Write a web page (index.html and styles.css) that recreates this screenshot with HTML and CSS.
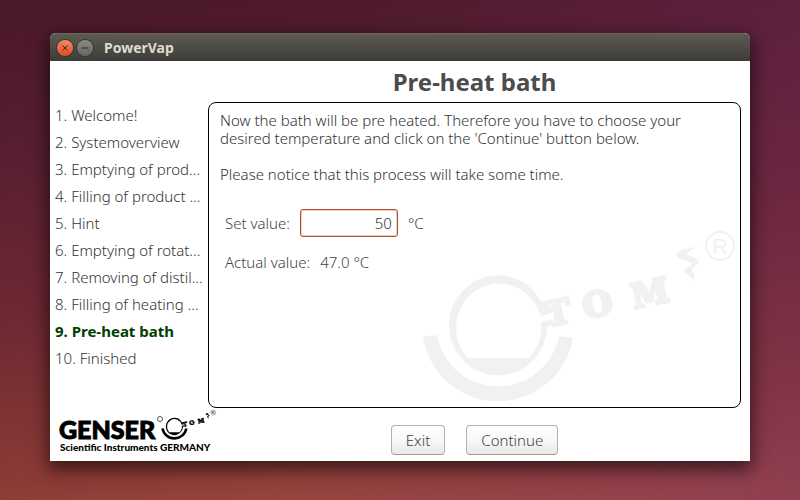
FILE: index.html
```
<!DOCTYPE html>
<html lang="en">
<head>
<meta charset="utf-8">
<meta name="viewport" content="width=device-width, initial-scale=1">
<title>PowerVap</title>
<link rel="stylesheet" href="styles.css">
</head>
<body>

<div class="window">
	<div class="titlebar">
		<button class="wbtn close" type="button" aria-label="Close">
			<svg width="16" height="16" viewBox="0 0 16 16"><path d="M5.500 5.500 L10.500 10.500 M10.500 5.500 L5.500 10.500"/></svg>
		</button>
		<button class="wbtn minimize" type="button" aria-label="Minimize">
			<svg width="16" height="16" viewBox="0 0 16 16"><path d="M4.500 8 H11.500"/></svg>
		</button>
		<span class="wtitle">PowerVap</span>
	</div>

	<div class="content">
		<h1>Pre-heat bath</h1>

		<ol class="steps">
			<li>1. Welcome!</li>
			<li>2. Systemoverview</li>
			<li>3. Emptying of prod...</li>
			<li>4. Filling of product ...</li>
			<li>5. Hint</li>
			<li>6. Emptying of rotat...</li>
			<li>7. Removing of distil...</li>
			<li>8. Filling of heating ...</li>
			<li class="current">9. Pre-heat bath</li>
			<li>10. Finished</li>
		</ol>

		<div class="panel">
			<!-- flask in the bath, reused by the small logo -->
			<svg class="watermark" width="330" height="187" viewBox="0 0 330 187" aria-hidden="true">
				<g id="tom">
					<path d="M135 91 A49 50 0 1 0 137 103 L131 103 A43 44 0 0 1 119 138 L58 138 A43 44 0 1 1 130 94 Z"/>
					<path d="M128 89 L142 86 L142 93 L131 96 Z M131 102 L143 99 L144 105 L133 107 Z"/>
					<path d="M13 117 A76 76 0 0 0 163 118 L149 116 A62 62 0 0 1 27 115 Z"/>
					<path d="M288 27 Q267 29 266 35 Q268 39 280 42 Q284 43 280 46 Q273 50 274 52 Q275 54 279 56 Q283 58 283 62 Q286 55 282 51 Q281 49 284 47 Q290 43 289 41 Q287 38 278 35 Q273 33 288 27 Z"/>
					<g class="tom-text" transform="translate(138 107) rotate(-12)">
						<text x="0" y="0">T</text>
						<text x="38" y="0">O</text>
						<text x="88" y="0">M</text>
					</g>
					<circle class="tom-ring" cx="310" cy="26" r="14"/>
					<text class="tom-reg" x="310" y="34">R</text>
				</g>
			</svg>
			<p>Now the bath will be pre heated. Therefore you have to choose your<br>desired temperature and click on the 'Continue' button below.</p>
			<p>Please notice that this process will take some time.</p>
			<div class="values">
				<div class="row">
					<label for="setvalue">Set value:</label>
					<input id="setvalue" type="text" value="50">
					<span>°C</span>
				</div>
				<div class="row">
					<span>Actual value:</span>
					<output>47.0 °C</output>
				</div>
			</div>
		</div>

		<svg class="logo" width="162" height="46" viewBox="0 0 162 46" role="img" aria-label="Genser Scientific Instruments Germany">
			<text class="brand" x="1" y="31">GENSER</text>
			<circle class="brand-ring" cx="102" cy="11" r="2.500"/>
			<text class="brand-sub" x="2" y="43">Scientific Instruments GERMANY</text>
			<use href="#tom" transform="translate(101 0) scale(0.175)"/>
		</svg>

		<div class="buttons">
			<button type="button">Exit</button>
			<button type="button">Continue</button>
		</div>
	</div>
</div>

</body>
</html>
```

FILE: styles.css
```
* {
	box-sizing: border-box;
}

body {
	margin: 0;
	padding: 33px 50px 39px;
	min-height: 100vh;
	display: flex;
	background:
		linear-gradient(100deg, rgba(110, 38, 92, 0) 40%, rgba(110, 38, 92, 0.4) 100%),
		linear-gradient(172deg, #4a1829 0%, #571f31 25%, #6c2732 50%, #8c3b36 80%, #a85048 100%);
	color: #333;
	font: 300 15px/18px "Noto Sans", "Open Sans", sans-serif;
}

.window {
	flex: 1;
	display: flex;
	flex-direction: column;
	background: #fff;
	border-radius: 6px 6px 0 0;
	box-shadow: 0 6px 18px 2px rgba(0, 0, 0, 0.6);
}

/* title bar */
.titlebar {
	display: flex;
	align-items: center;
	gap: 4px;
	height: 28px;
	padding-left: 7px;
	background: linear-gradient(#5d5a50, #3d3c38);
	border-top: 1px solid #69665c;
	border-radius: 6px 6px 0 0;
}

.wbtn {
	width: 16px;
	height: 16px;
	padding: 0;
	border: 0;
	border-radius: 50%;
	box-shadow: 0 0 0 1px #35342f;
}

.wbtn svg {
	display: block;
	fill: none;
	stroke: #3c2a22;
	stroke-width: 1;
}

.close {
	background: linear-gradient(#f58a64, #de4c1c);
}

.minimize {
	background: linear-gradient(#8b8a83, #66655f);
}

.wtitle {
	margin-left: 7px;
	color: #dfdbd2;
	font-size: 14px;
	font-weight: 700;
}

/* wizard page */
.content {
	flex: 1;
	display: grid;
	grid-template-columns: 158px 1fr;
	grid-template-rows: 41px 1fr 53px;
	padding-right: 9px;
}

h1 {
	grid-column: 2;
	margin: 0;
	text-align: center;
	color: #4c4c4c;
	font-size: 24px;
	line-height: 41px;
	font-weight: 700;
}

.steps {
	list-style: none;
	margin: 0;
	padding: 0 0 0 5px;
	line-height: 27px;
	white-space: nowrap;
}

.steps .current {
	color: #004000;
	font-weight: 700;
}

.panel {
	position: relative;
	padding: 8px 11px;
	border: 1px solid #000;
	border-radius: 8px;
}

.panel p {
	position: relative;
	margin: 0 0 18px;
}

.watermark {
	position: absolute;
	right: 0;
	bottom: 0;
	fill: #f1f1f1;
	stroke: none;
	color: #f1f1f1;
}

.tom-text {
	font: 700 34px "DejaVu Serif", serif;
	stroke: currentColor;
	stroke-width: 3;
}

.tom-ring {
	fill: none;
	stroke: currentColor;
	stroke-width: 2;
}

.tom-reg {
	font: 400 22px "Liberation Sans", sans-serif;
	text-anchor: middle;
}

.values {
	position: relative;
	display: flex;
	flex-direction: column;
	gap: 16px;
	padding: 8px 5px;
	color: #444;
}

.row {
	display: flex;
	align-items: center;
	gap: 10px;
}

.row input {
	width: 98px;
	height: 28px;
	padding: 0 5px;
	border: 1px solid #b5502f;
	border-radius: 3px;
	box-shadow: inset 0 0 0 1px #f3cdbc;
	background: #fff;
	color: #333;
	font: inherit;
	text-align: right;
}

/* footer */
.logo {
	margin-left: 8px;
	overflow: visible;
	fill: #000;
	color: #000;
}

.logo use {
	fill: #000;
}

.brand {
	font: 900 25px Lato, sans-serif;
	stroke: #000;
	stroke-width: 1;
}

.brand-ring {
	fill: none;
	stroke: #555;
	stroke-width: 1;
}

.brand-sub {
	font: 900 10px Lato, sans-serif;
}

.buttons {
	display: flex;
	justify-content: center;
	align-items: flex-start;
	gap: 21px;
	padding-top: 17px;
}

.buttons button {
	height: 30px;
	padding: 0 14px;
	border: 1px solid #b4b2ae;
	border-bottom-color: #9c9a96;
	border-radius: 4px;
	background: linear-gradient(#fefefe, #f8f8f8 50%, #e9e8e7);
	color: #444;
	font: inherit;
}
```
